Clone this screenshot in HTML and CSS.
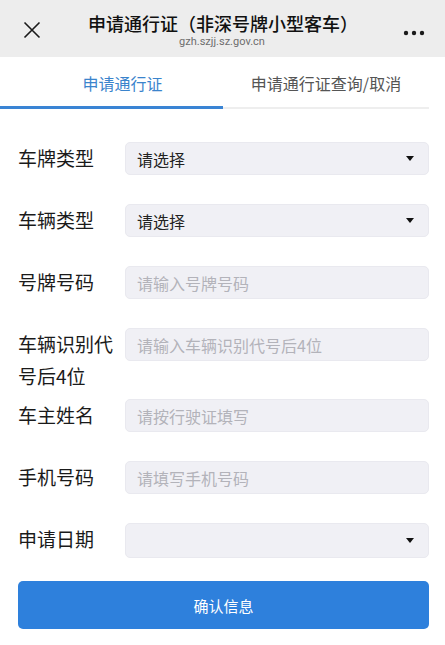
FILE: index.html
```html
<!DOCTYPE html>
<html lang="zh-CN">
<head>
<meta charset="utf-8">
<title>申请通行证</title>
<link rel="stylesheet" href="styles.css">
</head>
<body>
<header class="topbar">
  <span class="close">
    <svg width="18" height="18" viewBox="0 0 18 18"><path d="M1.5 1.5 L16.5 16.5 M16.5 1.5 L1.5 16.5" stroke="#1a1a1a" stroke-width="1.6" fill="none"/></svg>
  </span>
  <div class="titles">
    <div class="title">申请通行证（非深号牌小型客车）</div>
    <div class="subtitle">gzh.szjj.sz.gov.cn</div>
  </div>
  <span class="more">
    <svg width="22" height="6" viewBox="0 0 22 6"><circle cx="3" cy="3" r="2.2" fill="#1a1a1a"/><circle cx="11" cy="3" r="2.2" fill="#1a1a1a"/><circle cx="19" cy="3" r="2.2" fill="#1a1a1a"/></svg>
  </span>
</header>
<nav class="tabs">
  <div class="tab active"><span>申请通行证</span></div>
  <div class="tab"><span>申请通行证查询/取消</span></div>
</nav>
<main class="form">
  <div class="row">
    <div class="label">车牌类型</div>
    <div class="field select"><span class="value">请选择</span><span class="caret"></span></div>
  </div>
  <div class="row">
    <div class="label">车辆类型</div>
    <div class="field select"><span class="value">请选择</span><span class="caret"></span></div>
  </div>
  <div class="row">
    <div class="label">号牌号码</div>
    <div class="field"><span class="placeholder">请输入号牌号码</span></div>
  </div>
  <div class="row">
    <div class="label">车辆识别代号后4位</div>
    <div class="field"><span class="placeholder">请输入车辆识别代号后4位</span></div>
  </div>
  <div class="row">
    <div class="label">车主姓名</div>
    <div class="field"><span class="placeholder">请按行驶证填写</span></div>
  </div>
  <div class="row">
    <div class="label">手机号码</div>
    <div class="field"><span class="placeholder">请填写手机号码</span></div>
  </div>
  <div class="row last">
    <div class="label">申请日期</div>
    <div class="field select tall"><span class="value"></span><span class="caret"></span></div>
  </div>
  <button class="submit" type="button">确认信息</button>
</main>
</body>
</html>
```
FILE: styles.css
```css
* { box-sizing: border-box; }
html, body { margin: 0; padding: 0; }
body {
  width: 445px;
  height: 645px;
  overflow: hidden;
  background: #ffffff;
  font-family: "Noto Sans CJK SC", "Noto Sans", sans-serif;
  color: #1f1f1f;
}
.topbar {
  height: 57px;
  background: #ededed;
  display: flex;
  align-items: center;
  padding: 0 20px 0 23px;
}
.close { width: 18px; height: 18px; display: flex; margin-top: 2px; }
.titles {
  flex: 1;
  text-align: center;
  padding-top: 4px;
}
.title {
  font-size: 18px;
  line-height: 22px;
  font-weight: 500;
  color: #111;
  margin-left: 2px;
}
.subtitle {
  font-size: 11px;
  line-height: 14px;
  color: #6e6e6e;
  margin-top: 1px;
  font-family: "Roboto", "Noto Sans", sans-serif;
}
.more { width: 22px; height: 6px; display: flex; margin-top: 8px; }
.tabs {
  display: flex;
  height: 52px;
  background: #fff;
  padding-right: 16px;
}
.tab {
  flex: 1;
  display: flex;
  align-items: center;
  justify-content: center;
  font-size: 16px;
  color: #555;
  border-bottom: 2px solid #eeeeee;
  padding-top: 2px;
}
.tab.active {
  flex: 0 0 223px;
  color: #3b84cc;
  border-bottom: 3px solid #3a84d4;
  padding-left: 22px;
}
.form {
  padding: 33px 16px 0 18px;
}
.row {
  display: flex;
  align-items: flex-start;
  min-height: 55px;
  margin-bottom: 7px;
}
.label {
  width: 100px;
  margin-right: 7px;
  font-size: 19px;
  line-height: 32px;
  color: #1a1a1a;
}
.field {
  flex: 1;
  height: 33px;
  background: #f0f0f5;
  border: 1px solid #e9e9ef;
  border-radius: 5px;
  display: flex;
  align-items: center;
  padding: 0 14px 0 11px;
  font-size: 16px;
}
.field.tall { height: 35px; }
.value { flex: 1; color: #222; }
.placeholder { flex: 1; color: #b3b3ba; }
.caret {
  width: 0;
  height: 0;
  border-left: 4.5px solid transparent;
  border-right: 4.5px solid transparent;
  border-top: 5.5px solid #111;
}
.row.last { margin-bottom: 3px; }
.submit {
  display: block;
  width: 100%;
  height: 48px;
  border: none;
  border-radius: 5px;
  background: #2e80dc;
  color: #fff;
  font-family: "Noto Sans CJK SC", "Noto Sans", sans-serif;
  font-size: 15px;
}
```
